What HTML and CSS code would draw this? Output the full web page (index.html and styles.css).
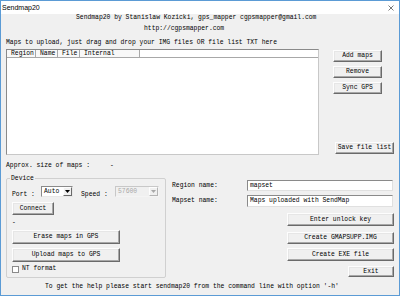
FILE: index.html
```html
<!DOCTYPE html>
<html>
<head>
<meta charset="utf-8">
<link rel="stylesheet" href="styles.css">
</head>
<body>
<div class="win">
  <div class="titlebar">
    <span class="title">Sendmap20</span>
    <svg class="close" width="6" height="6" viewBox="0 0 6 6"><path d="M0.5 0.5L5.5 5.5M5.5 0.5L0.5 5.5" stroke="#555" stroke-width="0.8" fill="none"/></svg>
  </div>
  <p class="line l1">Sendmap20 by Stanislaw Kozicki, gps_mapper cgpsmapper@gmail.com</p>
  <p class="line l2">http://cgpsmapper.com</p>
  <p class="line hint">Maps to upload, just drag and drop your IMG files OR file list TXT here</p>
  <div class="top">
    <div class="list">
      <div class="cols">
        <span class="col c-region">Region</span>
        <span class="col c-name">Name</span>
        <span class="col c-file">File</span>
        <span class="col c-int">Internal</span>
        <span class="col c-fill"></span>
      </div>
    </div>
    <div class="side">
      <button class="btn b-add">Add maps</button>
      <button class="btn b-rem">Remove</button>
      <button class="btn b-sync">Sync GPS</button>
      <button class="btn b-save">Save file list</button>
    </div>
  </div>
  <div class="line approx"><span>Approx. size of maps :</span><span class="dash">-</span></div>
  <div class="bottom">
    <div class="group">
      <span class="legend">Device</span>
      <div class="portrow">
        <span class="lbl l-port">Port :</span>
        <div class="sel s-port"><span class="sel-text">Auto</span><span class="sel-btn"><svg width="5" height="3" viewBox="0 0 5 3"><path d="M0 0H5L2.5 3Z" fill="#000"/></svg></span></div>
        <span class="lbl l-speed">Speed :</span>
        <div class="sel s-speed dis"><span class="sel-text">57600</span><span class="sel-btn"><svg width="5" height="3" viewBox="0 0 5 3"><path d="M0 0H5L2.5 3Z" fill="#a8a8a8"/></svg></span></div>
      </div>
      <button class="btn b-connect">Connect</button>
      <div class="line gdash">-</div>
      <button class="btn b-wide b-erase">Erase maps in GPS</button>
      <button class="btn b-wide b-upload">Upload maps to GPS</button>
      <label class="nt"><span class="chk"></span><span class="nt-text">NT format</span></label>
    </div>
    <div class="right">
      <div class="frow r1"><span class="flbl">Region name:</span><span class="inp i1">mapset</span></div>
      <div class="frow r2"><span class="flbl">Mapset name:</span><span class="inp i2">Maps uploaded with SendMap</span></div>
      <button class="btn b-r b-unlock">Enter unlock key</button>
      <button class="btn b-r b-gmap">Create GMAPSUPP.IMG</button>
      <button class="btn b-r b-exe">Create EXE file</button>
      <button class="btn b-exit">Exit</button>
    </div>
  </div>
  <p class="line help">To get the help please start sendmap20 from the command line with option '-h'</p>
</div>
</body>
</html>
```
FILE: styles.css
```css
* { box-sizing: border-box; }
html, body { margin: 0; padding: 0; }
body { width: 400px; height: 296px; overflow: hidden; background: #fff; }

.win {
  width: 400px; height: 296px;
  border: 1px solid #5b9bd5;
  background: #f0f0f0;
  display: flex; flex-direction: column;
  font-family: "Liberation Mono", "DejaVu Sans Mono", monospace;
  font-size: 6.37px; line-height: 8px; color: #000;
}

.titlebar {
  height: 13px; flex: none; background: #fff;
  display: flex; align-items: center;
  padding: 0 5px 0 1px;
}
.title { font-family: "Liberation Sans", Arial, sans-serif; font-size: 7px; line-height: 8px; color: #000; }
.close { margin-left: auto; }

.line { margin: 0; height: 8px; white-space: pre; flex: none; }
.l1 { padding-left: 75px; }
.l2 { margin-top: 3px; padding-left: 143px; }
.hint { margin-top: 6px; padding-left: 5px; }

.top { display: flex; margin-top: 2px; height: 106px; flex: none; }
.list {
  margin-left: 5px; width: 313px; height: 106px;
  background: #fff;
  border: 1px solid; border-color: #8a8a8a #c8c8c8 #c8c8c8 #8a8a8a;
}
.cols { display: flex; height: 8px; border-bottom: 1px solid #a8a8a8; }
.col { border-right: 1px solid #a8a8a8; padding-left: 4px; line-height: 8px; background: #f8f8f8; }
.c-region { width: 29px; }
.c-name { width: 22px; }
.c-file { width: 22px; }
.c-int { width: 60px; }
.c-fill { flex: 1; border-right: none; background: #fff; }

.side { margin-left: 14px; width: 61px; display: flex; flex-direction: column; align-items: flex-start; }

.btn {
  font: inherit; color: #000; padding: 0; margin: 0;
  background: #f0f0f0;
  border: 1px solid; border-color: #fdfdfd #6a6a6a #6a6a6a #fdfdfd;
  box-shadow: inset -1px -1px #a8a8a8, inset 1px 1px #e6e6e6;
  display: flex; align-items: center; justify-content: center;
  line-height: 8px; flex: none;
}
.b-add { margin-top: 1px; width: 49px; height: 12px; }
.b-rem { margin-top: 4px; width: 49px; height: 12px; }
.b-sync { margin-top: 4px; width: 49px; height: 12px; }
.b-save { margin-top: auto; margin-bottom: 1px; align-self: flex-end; width: 59px; height: 12px; }

.approx { margin-top: 7px; padding-left: 5px; display: flex; }
.dash { margin-left: 20px; }

.bottom { display: flex; margin-top: 4px; flex: none; align-items: flex-start; }

.group {
  position: relative;
  margin-left: 5px; margin-top: 4px;
  width: 160px; height: 100px;
  border: 1px solid #d0d0d0; border-radius: 2px;
  padding: 7px 0 0 5px;
  display: flex; flex-direction: column; align-items: flex-start;
}
.legend { position: absolute; top: -4px; left: 3px; padding: 0 1px; background: #f0f0f0; line-height: 8px; }

.portrow { display: flex; align-items: flex-end; height: 11px; }
.lbl { line-height: 8px; margin-bottom: -2px; }
.l-port { width: 29px; }
.l-speed { width: 34px; margin-left: 8px; }
.sel {
  height: 11px; display: flex; align-items: stretch;
  background: #fff;
  border: 1px solid; border-color: #8a8a8a #e8e8e8 #e8e8e8 #8a8a8a;
}
.s-port { width: 32px; }
.s-speed { width: 44px; }
.sel-text { flex: 1; padding-left: 2px; line-height: 9px; }
.sel-btn {
  width: 9px; display: flex; align-items: center; justify-content: center;
  background: #f0f0f0;
  border: 1px solid; border-color: #fdfdfd #6a6a6a #6a6a6a #fdfdfd;
}
.dis { background: #f0f0f0; color: #a8a8a8; border-color: #c8c8c8 #f4f4f4 #f4f4f4 #c8c8c8; }
.dis .sel-btn { border-color: #fdfdfd #b4b4b4 #b4b4b4 #fdfdfd; }

.b-connect { margin-top: 5px; width: 42px; height: 13px; }
.gdash { margin-top: 4px; }
.b-wide { width: 108px; height: 14px; }
.b-erase { margin-top: 3px; }
.b-upload { margin-top: 4px; }
.nt { margin-top: 3px; display: flex; align-items: center; height: 8px; }
.chk { width: 7px; height: 7px; background: #fff; border: 1px solid #8a8a8a; }
.nt-text { margin-left: 3px; }

.right { margin-left: 6px; width: 222px; display: flex; flex-direction: column; align-items: flex-start; }
.frow { display: flex; align-items: center; }
.r1 { margin-top: 6px; height: 11px; }
.r2 { margin-top: 4px; height: 12px; }
.flbl { width: 75px; line-height: 8px; }
.inp {
  width: 146px; height: 100%;
  background: #fff;
  border: 1px solid; border-color: #8a8a8a #e0e0e0 #e0e0e0 #8a8a8a;
  padding-left: 2px; display: flex; align-items: center;
}
.b-r { align-self: flex-end; width: 107px; }
.b-unlock { margin-top: 6px; height: 13px; }
.b-gmap { margin-top: 6px; height: 12px; }
.b-exe { margin-top: 4px; height: 13px; }
.b-exit { margin-top: 5px; align-self: flex-end; width: 46px; height: 11px; }

.help { margin-top: 5px; padding-left: 44px; }
```
